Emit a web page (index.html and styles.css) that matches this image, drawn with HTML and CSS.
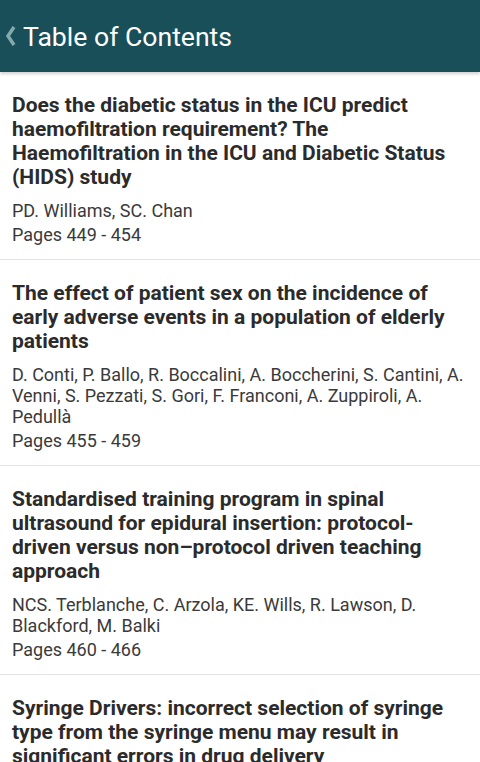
FILE: index.html
```html
<!DOCTYPE html>
<html>
<head>
<meta charset="utf-8">
<link rel="stylesheet" href="styles.css">
</head>
<body>
<header class="bar">
  <svg class="back" width="11" height="22" viewBox="0 0 11 22"><path d="M9 2 L3 11 L9 20" fill="none" stroke="#86a9ad" stroke-width="3.5"/></svg>
  <span class="bar-title">Table of Contents</span>
</header>
<ul class="list">
  <li class="item">
    <div class="title">Does the diabetic status in the ICU predict haemofiltration requirement? The Haemofiltration in the ICU and Diabetic Status (HIDS) study</div>
    <div class="authors">PD. Williams, SC. Chan</div>
    <div class="pages">Pages 449 - 454</div>
  </li>
  <li class="item">
    <div class="title">The effect of patient sex on the incidence of early adverse events in a population of elderly patients</div>
    <div class="authors">D. Conti, P. Ballo, R. Boccalini, A. Boccherini, S. Cantini, A. Venni, S. Pezzati, S. Gori, F. Franconi, A. Zuppiroli, A. Pedullà</div>
    <div class="pages">Pages 455 - 459</div>
  </li>
  <li class="item">
    <div class="title">Standardised training program in spinal ultrasound for epidural insertion: protocol-driven versus non–protocol driven teaching approach</div>
    <div class="authors">NCS. Terblanche, C. Arzola, KE. Wills, R. Lawson, D. Blackford, M. Balki</div>
    <div class="pages">Pages 460 - 466</div>
  </li>
  <li class="item">
    <div class="title">Syringe Drivers: incorrect selection of syringe type from the syringe menu may result in significant errors in drug delivery</div>
    <div class="authors">A. Author</div>
    <div class="pages">Pages 467 - 470</div>
  </li>
</ul>
</body>
</html>
```
FILE: styles.css
```css
html, body {
  margin: 0;
  padding: 0;
  background: #ffffff;
  font-family: Roboto, "Noto Sans", sans-serif;
  overflow: hidden;
  height: 762px;
}
.bar {
  height: 72px;
  background: #194f58;
  display: flex;
  align-items: center;
  padding-left: 5px;
  box-shadow: 0 2px 3px rgba(0,0,0,0.18);
  position: relative;
  z-index: 1;
}
.back {
  margin-right: 7px;
}
.bar-title {
  color: #ffffff;
  font-size: 26.6px;
  margin-top: 1px;
}
.list {
  list-style: none;
  margin: 0;
  padding: 0;
}
.item {
  padding: 21px 8px 14px 12px;
  border-bottom: 1.5px solid #e3e3e3;
}
.title {
  font-weight: bold;
  font-size: 21px;
  line-height: 24px;
  color: #2b2b2b;
  margin-bottom: 11px;
  padding-right: 4px;
}
.authors {
  font-size: 18px;
  line-height: 21px;
  color: #3a3a3a;
  margin-bottom: 3px;
}
.pages {
  font-size: 18px;
  line-height: 21px;
  color: #3a3a3a;
}
```
